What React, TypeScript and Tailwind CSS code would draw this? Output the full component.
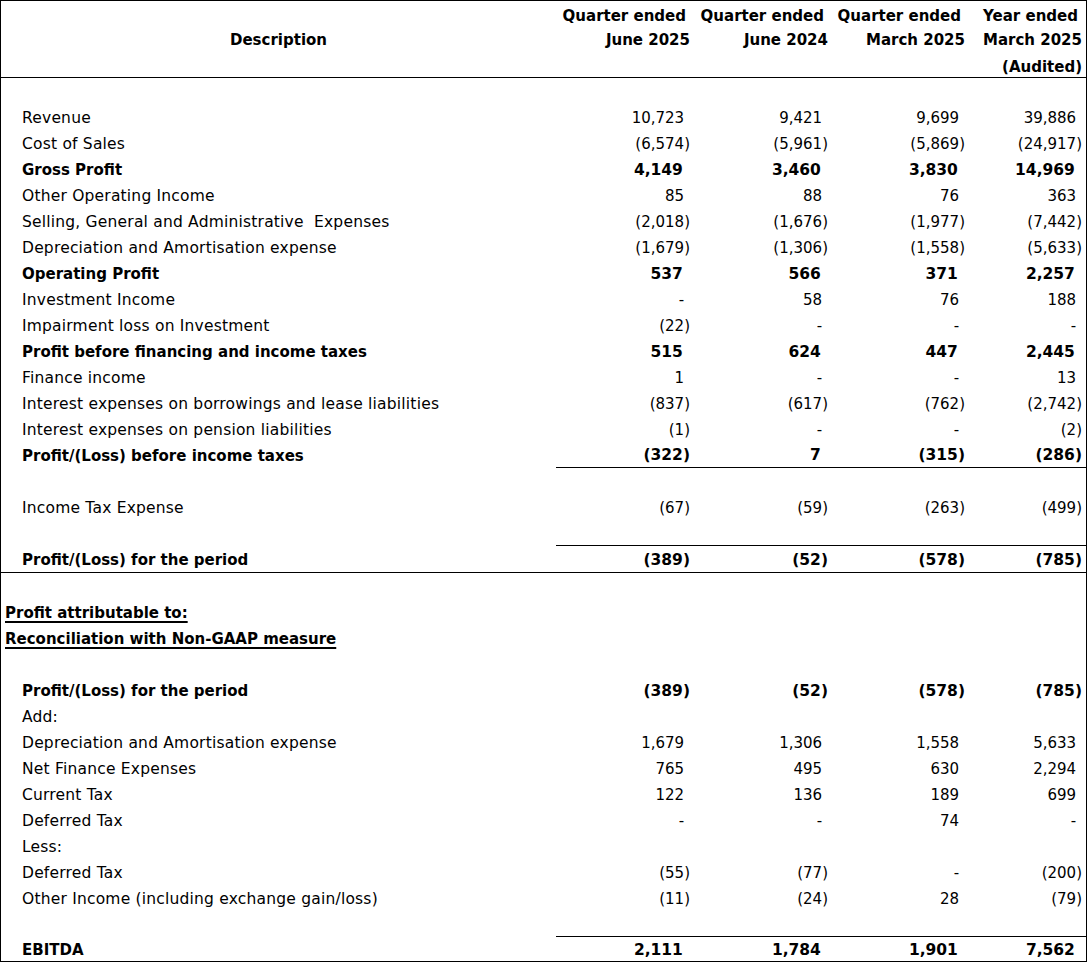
import React from "react";

type Val = number | null;

type Row = {
  label?: string;
  vals?: Val[];
  bold?: boolean;
  heading?: boolean;
  lineUnder?: boolean;
  fullLine?: boolean;
  last?: boolean;
};

// accounting style: negatives in brackets, zero as a dash, positives padded by a hidden ")"
const Num: React.FC<{ v: Val }> = ({ v }) => {
  if (v === null) {
    return (
      <>
        -<span className="invisible">)</span>
      </>
    );
  }
  const s = Math.abs(v).toLocaleString("en-US");
  if (v < 0) return <>({s})</>;
  return (
    <>
      {s}
      <span className="invisible">)</span>
    </>
  );
};

const incomeRows: Row[] = [
  {},
  { label: "Revenue", vals: [10723, 9421, 9699, 39886] },
  { label: "Cost of Sales", vals: [-6574, -5961, -5869, -24917] },
  { label: "Gross Profit", vals: [4149, 3460, 3830, 14969], bold: true },
  { label: "Other Operating Income", vals: [85, 88, 76, 363] },
  {
    label: "Selling, General and Administrative  Expenses",
    vals: [-2018, -1676, -1977, -7442],
  },
  {
    label: "Depreciation and Amortisation expense",
    vals: [-1679, -1306, -1558, -5633],
  },
  { label: "Operating Profit", vals: [537, 566, 371, 2257], bold: true },
  { label: "Investment Income", vals: [null, 58, 76, 188] },
  { label: "Impairment loss on Investment", vals: [-22, null, null, null] },
  {
    label: "Profit before financing and income taxes",
    vals: [515, 624, 447, 2445],
    bold: true,
  },
  { label: "Finance income", vals: [1, null, null, 13] },
  {
    label: "Interest expenses on borrowings and lease liabilities",
    vals: [-837, -617, -762, -2742],
  },
  {
    label: "Interest expenses on pension liabilities",
    vals: [-1, null, null, -2],
  },
  {
    label: "Profit/(Loss) before income taxes",
    vals: [-322, 7, -315, -286],
    bold: true,
    lineUnder: true,
  },
  {},
  { label: "Income Tax Expense", vals: [-67, -59, -263, -499] },
  { lineUnder: true },
  {
    label: "Profit/(Loss) for the period",
    vals: [-389, -52, -578, -785],
    bold: true,
    fullLine: true,
  },
];

const reconRows: Row[] = [
  {},
  { label: "Profit attributable to:", heading: true },
  { label: "Reconciliation with Non-GAAP measure", heading: true },
  {},
  {
    label: "Profit/(Loss) for the period",
    vals: [-389, -52, -578, -785],
    bold: true,
  },
  { label: "Add:" },
  {
    label: "Depreciation and Amortisation expense",
    vals: [1679, 1306, 1558, 5633],
  },
  { label: "Net Finance Expenses", vals: [765, 495, 630, 2294] },
  { label: "Current Tax", vals: [122, 136, 189, 699] },
  { label: "Deferred Tax", vals: [null, null, 74, null] },
  { label: "Less:" },
  { label: "Deferred Tax", vals: [-55, -77, null, -200] },
  {
    label: "Other Income (including exchange gain/loss)",
    vals: [-11, -24, 28, -79],
  },
  { lineUnder: true },
  { label: "EBITDA", vals: [2111, 1784, 1901, 7562], bold: true, last: true },
];

const cols = "grid grid-cols-[555px_138px_138px_137px_117px]";

const TableRow: React.FC<{ row: Row }> = ({ row }) => {
  const strong = row.bold || row.heading;
  const h = row.last ? "h-[24px]" : "h-[26px]";
  const numCell = `${h} pt-[3px] flex items-center justify-end pr-[4px] ${
    strong ? "font-bold text-[15.5px]" : "text-[15px]"
  } ${row.lineUnder ? "border-b border-black" : ""}`;
  return (
    <div className={`${cols} ${row.fullLine ? "border-b border-black" : ""}`}>
      <div
        className={`${h} pt-[3px] flex items-center whitespace-pre ${
          row.heading ? "pl-[4px]" : "pl-[21px]"
        } ${strong ? "font-bold text-[15px]" : "text-[15.5px] tracking-[0.2px]"}`}
      >
        {row.heading ? (
          <span className="underline decoration-[1.5px] underline-offset-[3px]">
            {row.label}
          </span>
        ) : (
          row.label
        )}
      </div>
      {[0, 1, 2, 3].map((i) => (
        <div key={i} className={numCell}>
          {row.vals ? <Num v={row.vals[i]} /> : null}
        </div>
      ))}
    </div>
  );
};

const headCols = [
  ["Quarter ended", "June 2025", ""],
  ["Quarter ended", "June 2024", ""],
  ["Quarter ended", "March 2025", ""],
  ["Year ended", "March 2025", "(Audited)"],
];

export default function App() {
  return (
    <div className="min-h-screen bg-white text-black font-['DejaVu_Sans',sans-serif]">
      <div className="w-[1087px] border border-black">
        {/* Header */}
        <div
          className={`${cols} h-[77px] border-b border-black font-bold text-[15px]`}
        >
          <div className="pt-[2px] flex items-center justify-center">
            Description
          </div>
          {headCols.map((c, i) => (
            <div key={i} className="flex flex-col items-end pr-[4px] pt-[3px]">
              <div className="h-[25px] flex items-center pr-[4px]">{c[0]}</div>
              <div className="h-[23px] flex items-center">{c[1]}</div>
              <div className="h-[25px] pt-[6px] flex items-center">{c[2]}</div>
            </div>
          ))}
        </div>

        {/* Income statement */}
        {incomeRows.map((r, i) => (
          <TableRow key={"a" + i} row={r} />
        ))}

        {/* Reconciliation */}
        {reconRows.map((r, i) => (
          <TableRow key={"b" + i} row={r} />
        ))}
      </div>
    </div>
  );
}
